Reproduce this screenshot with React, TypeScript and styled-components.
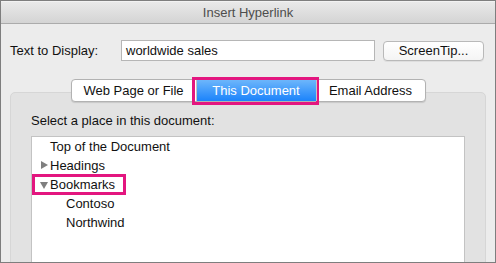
import React from "react";
import styled, { createGlobalStyle } from "styled-components";

const GlobalStyle = createGlobalStyle`
  html, body {
    margin: 0;
    padding: 0;
    background: #ececec;
  }
  * {
    box-sizing: border-box;
  }
`;

const Window = styled.div`
  width: 496px;
  height: 263px;
  border: 1px solid #7e7e7e;
  background: #ececec;
  display: flex;
  flex-direction: column;
  overflow: hidden;
  font-family: "Liberation Sans", Arial, sans-serif;
  font-size: 13px;
  color: #111;
`;

const TitleBar = styled.div`
  height: 23px;
  flex: none;
  border-top: 1px solid #f2f2f2;
  border-bottom: 1px solid #ababab;
  background: linear-gradient(#e9e9e9, #d4d4d4);
  display: flex;
  align-items: center;
  justify-content: center;
  color: #4d4d4d;
`;

const Body = styled.div`
  flex: 1;
  padding: 16px 9px 0 9px;
  display: flex;
  flex-direction: column;
`;

const DisplayRow = styled.div`
  display: flex;
  align-items: center;
  height: 21px;
`;

const Label = styled.div`
  width: 111px;
`;

const TextField = styled.div`
  width: 254px;
  height: 21px;
  background: #fff;
  border: 1px solid #b6b6b6;
  padding-left: 4px;
  display: flex;
  align-items: center;
`;

const Button = styled.div`
  margin-left: 8px;
  width: 101px;
  height: 20px;
  border: 1px solid #b9b9b9;
  border-radius: 4px;
  background: linear-gradient(#ffffff, #f4f4f4);
  box-shadow: 0 1px 0 rgba(0, 0, 0, 0.06);
  display: flex;
  align-items: center;
  justify-content: center;
`;

const Group = styled.div`
  margin-top: 31px;
  flex: 1;
  margin-bottom: -10px;
  background: #e2e2e2;
  border: 1px solid #d6d6d6;
  border-radius: 5px;
  padding: 0 20px;
  display: flex;
  flex-direction: column;
`;

const TabBar = styled.div`
  margin-top: -14px;
  align-self: center;
  display: flex;
  height: 23px;
  background: #fff;
  border: 1px solid #b2b2b2;
  border-radius: 4px;
  box-shadow: 0 1px 1px rgba(0, 0, 0, 0.12);
`;

const Tab = styled.div<{ $w: number; $active?: boolean; $first?: boolean }>`
  position: relative;
  width: ${(p) => p.$w}px;
  display: flex;
  align-items: center;
  justify-content: center;
  border-left: ${(p) => (p.$first ? "none" : "1px solid #c4c4c4")};
  background: ${(p) =>
    p.$active ? "linear-gradient(#6db6fb, #1b83fb)" : "transparent"};
  color: ${(p) => (p.$active ? "#fff" : "#111")};
`;

const Callout = styled.div<{ $t: number; $r: number; $b: number; $l: number }>`
  position: absolute;
  top: ${(p) => p.$t}px;
  right: ${(p) => p.$r}px;
  bottom: ${(p) => p.$b}px;
  left: ${(p) => p.$l}px;
  border: 3px solid #e3167f;
  pointer-events: none;
`;

const Caption = styled.div`
  margin-top: 11px;
  height: 16px;
  line-height: 16px;
  padding-left: 0;
`;

const List = styled.div`
  margin-top: 7px;
  flex: 1;
  background: #fff;
  border: 1px solid #c3c3c3;
  display: flex;
  flex-direction: column;
`;

const Row = styled.div<{ $indent: number }>`
  position: relative;
  height: 19px;
  display: flex;
  align-items: center;
  padding-left: ${(p) => p.$indent}px;
`;

const Disclosure = styled.span<{ $open?: boolean }>`
  position: absolute;
  left: 8px;
  top: 6px;
  width: 0;
  height: 0;
  ${(p) =>
    p.$open
      ? `border-left: 4px solid transparent;
         border-right: 4px solid transparent;
         border-top: 7px solid #7f7f7f;
         top: 7px;`
      : `border-top: 4px solid transparent;
         border-bottom: 4px solid transparent;
         border-left: 7px solid #7f7f7f;
         left: 9px;
         top: 5px;`}
`;

const TextWrap = styled.span`
  position: relative;
`;

export default function App() {
  return (
    <>
      <GlobalStyle />
      <Window>
        <TitleBar>Insert Hyperlink</TitleBar>
        <Body>
          <DisplayRow>
            <Label>Text to Display:</Label>
            <TextField>worldwide sales</TextField>
            <Button>ScreenTip...</Button>
          </DisplayRow>
          <Group>
            <TabBar>
              <Tab $w={124} $first>
                Web Page or File
              </Tab>
              <Tab $w={120} $active>
                This Document
                <Callout $t={-3} $r={-3} $b={-4} $l={-5} />
              </Tab>
              <Tab $w={109}>Email Address</Tab>
            </TabBar>
            <Caption>Select a place in this document:</Caption>
            <List>
              <Row $indent={18}>Top of the Document</Row>
              <Row $indent={18}>
                <Disclosure />
                Headings
              </Row>
              <Row $indent={18}>
                <Disclosure $open />
                <TextWrap>Bookmarks</TextWrap>
                <Callout $t={-1} $r={338} $b={-1} $l={0} />
              </Row>
              <Row $indent={34}>Contoso</Row>
              <Row $indent={34}>Northwind</Row>
            </List>
          </Group>
        </Body>
      </Window>
    </>
  );
}
